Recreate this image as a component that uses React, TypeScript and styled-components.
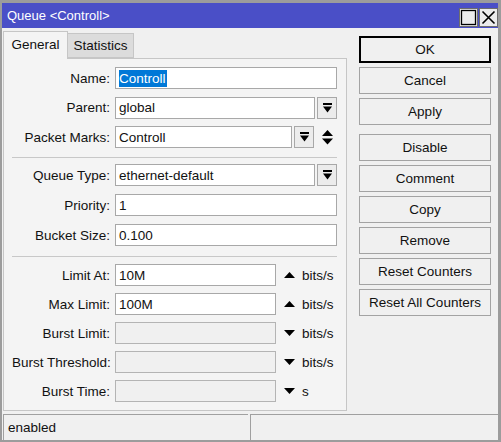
import styled, { createGlobalStyle } from "styled-components";

const GlobalStyle = createGlobalStyle`
    html, body {
        margin: 0;
        padding: 0;
        background: #f0f0f0;
    }
    * {
        box-sizing: border-box;
    }
`;

const DropIcon = () => (
    <svg width="9" height="10" viewBox="0 0 9 10">
        <rect x="0" y="0" width="9" height="2" fill="#000"/>
        <polygon points="0,3.5 9,3.5 4.5,9.5" fill="#000"/>
    </svg>
);

const UpDownIcon = () => (
    <svg width="11" height="15" viewBox="0 0 11 15">
        <polygon points="0,6 11,6 5.5,0" fill="#000"/>
        <polygon points="0,8.5 11,8.5 5.5,14.5" fill="#000"/>
    </svg>
);

const ArrowIcon = ({up}: { up: boolean }) => (
    <svg width="11" height="6" viewBox="0 0 11 6">
        {up
            ? <polygon points="0,6 11,6 5.5,0" fill="#000"/>
            : <polygon points="0,0 11,0 5.5,6" fill="#000"/>}
    </svg>
);

const MaxIcon = () => (
    <svg width="17" height="17" viewBox="0 0 17 17">
        <rect x="1.5" y="1.5" width="14" height="14" fill="none" stroke="#000" strokeWidth="1.3"/>
    </svg>
);

const CloseIcon = () => (
    <svg width="17" height="17" viewBox="0 0 17 17">
        <path d="M2.5 2.5 L14.5 14.5 M14.5 2.5 L2.5 14.5" stroke="#000" strokeWidth="1.6"/>
    </svg>
);

type LimitRow = { label: string; value: string; up: boolean; unit: string };

const limits: LimitRow[] = [
    {label: "Limit At:", value: "10M", up: true, unit: "bits/s"},
    {label: "Max Limit:", value: "100M", up: true, unit: "bits/s"},
    {label: "Burst Limit:", value: "", up: false, unit: "bits/s"},
    {label: "Burst Threshold:", value: "", up: false, unit: "bits/s"},
    {label: "Burst Time:", value: "", up: false, unit: "s"},
];

const buttons = ["OK", "Cancel", "Apply", "Disable", "Comment", "Copy", "Remove", "Reset Counters", "Reset All Counters"];

export default function App() {
    return <>
        <GlobalStyle/>
        <Window>
            <TitleBar>
                <Title>Queue &lt;Controll&gt;</Title>
                <TitleButtons>
                    <TitleButton><MaxIcon/></TitleButton>
                    <TitleButton><CloseIcon/></TitleButton>
                </TitleButtons>
            </TitleBar>

            <Body>
                <LeftColumn>
                    <Tabs>
                        <Tab $active>General</Tab>
                        <Tab>Statistics</Tab>
                    </Tabs>
                    <Panel>
                        <Section $gap={7.5}>
                            <Row>
                                <Label>Name:</Label>
                                <Field $width={222}><Selected>Controll</Selected></Field>
                            </Row>
                            <Row>
                                <Label>Parent:</Label>
                                <Field $width={200}>global</Field>
                                <DropButton><DropIcon/></DropButton>
                            </Row>
                            <Row>
                                <Label>Packet Marks:</Label>
                                <Field $width={177}>Controll</Field>
                                <DropButton><DropIcon/></DropButton>
                                <SideIcon><UpDownIcon/></SideIcon>
                            </Row>
                        </Section>
                        <Separator $top={9} $bottom={6}/>
                        <Section $gap={8}>
                            <Row>
                                <Label>Queue Type:</Label>
                                <Field $width={200}>ethernet-default</Field>
                                <DropButton><DropIcon/></DropButton>
                            </Row>
                            <Row>
                                <Label>Priority:</Label>
                                <Field $width={222}>1</Field>
                            </Row>
                            <Row>
                                <Label>Bucket Size:</Label>
                                <Field $width={222}>0.100</Field>
                            </Row>
                        </Section>
                        <Separator $top={10} $bottom={7}/>
                        <Section $gap={7}>
                            {limits.map(l => (
                                <Row key={l.label}>
                                    <Label>{l.label}</Label>
                                    <Field $width={161} $disabled={!l.value}>{l.value}</Field>
                                    <SideIcon><ArrowIcon up={l.up}/></SideIcon>
                                    <Unit>{l.unit}</Unit>
                                </Row>
                            ))}
                        </Section>
                    </Panel>
                </LeftColumn>

                <RightColumn>
                    {buttons.map(b => (
                        <ActionButton key={b} $primary={b === "OK"} $spaced={b === "Disable"}>{b}</ActionButton>
                    ))}
                </RightColumn>
            </Body>

            <StatusBar>
                <StatusCell $width={245}>enabled</StatusCell>
                <StatusCell $width={249}/>
            </StatusBar>
        </Window>
    </>
}

const Window = styled.div`
    width: 501px;
    height: 442px;
    display: flex;
    flex-direction: column;
    background: #f0f0f0;
    border-style: solid;
    border-color: #9c9c9c;
    border-width: 3px 3px 2px 2px;
    font-family: "Liberation Sans", Arial, sans-serif;
    font-size: 13.5px;
    color: #111;
`;

const TitleBar = styled.div`
    height: 25px;
    flex-shrink: 0;
    background: #4a4fc7;
    display: flex;
    align-items: center;
    justify-content: space-between;
    padding-left: 5px;
`;

const Title = styled.span`
    color: #fff;
    font-size: 13px;
`;

const TitleButtons = styled.div`
    display: flex;
    align-self: flex-end;
    margin-bottom: 1px;
    gap: 1px;
`;

const TitleButton = styled.div`
    width: 19px;
    height: 19px;
    background: #ececec;
    border: 1px solid #6e6e6e;
    display: flex;
    align-items: center;
    justify-content: center;
`;

const Body = styled.div`
    flex: 1;
    display: flex;
    padding-left: 1px;
`;

const LeftColumn = styled.div`
    width: 344px;
    display: flex;
    flex-direction: column;
    padding: 3px 0 2px;
`;

const Tabs = styled.div`
    height: 27px;
    display: flex;
    align-items: flex-end;
    position: relative;
    z-index: 1;
`;

const Tab = styled.div<{ $active?: boolean }>`
    height: ${p => p.$active ? 28 : 25}px;
    width: ${p => p.$active ? 65 : 66}px;
    margin-bottom: ${p => p.$active ? -1 : 0}px;
    background: ${p => p.$active ? "#f4f4f4" : "#dcdcdc"};
    border: 1px solid #c6c6c6;
    border-bottom: ${p => p.$active ? "none" : "1px solid #c6c6c6"};
    border-left: ${p => p.$active ? "1px solid #c6c6c6" : "none"};
    display: flex;
    align-items: center;
    justify-content: center;
    padding-bottom: ${p => p.$active ? 2 : 0}px;
`;

const Panel = styled.div`
    flex: 1;
    background: #f4f4f4;
    border: 1px solid #c6c6c6;
    padding: 8px 0 0 8px;
    display: flex;
    flex-direction: column;
`;

const Section = styled.div<{ $gap: number }>`
    display: flex;
    flex-direction: column;
    gap: ${p => p.$gap}px;
`;

const Separator = styled.div<{ $top: number; $bottom: number }>`
    width: 325px;
    height: 1px;
    background: #c8c8c8;
    margin: ${p => p.$top}px 0 ${p => p.$bottom}px;
`;

const Row = styled.div`
    height: 22px;
    display: flex;
    align-items: center;
`;

const Label = styled.div`
    width: 98px;
    flex-shrink: 0;
    text-align: right;
    margin-right: 5px;
    white-space: nowrap;
`;

const Field = styled.div<{ $width: number; $disabled?: boolean }>`
    width: ${p => p.$width}px;
    height: 22px;
    flex-shrink: 0;
    background: ${p => p.$disabled ? "#f0f0f0" : "#fff"};
    border: 1px solid ${p => p.$disabled ? "#b4b4b4" : "#a8a8a8"};
    padding-left: 3px;
    display: flex;
    align-items: center;
    white-space: nowrap;
`;

const Selected = styled.span`
    background: #0078d7;
    color: #fff;
    line-height: 17px;
    padding: 0 1px 0 0;
`;

const DropButton = styled.div`
    width: 20px;
    height: 22px;
    margin-left: 2px;
    flex-shrink: 0;
    background: #ececec;
    border: 1px solid #a8a8a8;
    display: flex;
    align-items: center;
    justify-content: center;
`;

const SideIcon = styled.div`
    margin-left: 8px;
    display: flex;
    align-items: center;
`;

const Unit = styled.span`
    margin-left: 7px;
`;

const RightColumn = styled.div`
    width: 132px;
    margin-left: 12px;
    padding-top: 8px;
    display: flex;
    flex-direction: column;
    gap: 4px;
`;

const ActionButton = styled.div<{ $primary?: boolean; $spaced?: boolean }>`
    height: 27px;
    margin-top: ${p => p.$spaced ? 5 : 0}px;
    background: #f0f0f0;
    border: ${p => p.$primary ? "2px solid #000" : "1px solid #a3a3a3"};
    display: flex;
    align-items: center;
    justify-content: center;
    white-space: nowrap;
`;

const StatusBar = styled.div`
    height: 27px;
    flex-shrink: 0;
    display: flex;
    gap: 2px;
    padding: 1px 0 0 1px;
`;

const StatusCell = styled.div<{ $width: number }>`
    width: ${p => p.$width}px;
    border-top: 1px solid #a0a0a0;
    border-left: 1px solid #a0a0a0;
    padding-left: 4px;
    display: flex;
    align-items: center;
`;
